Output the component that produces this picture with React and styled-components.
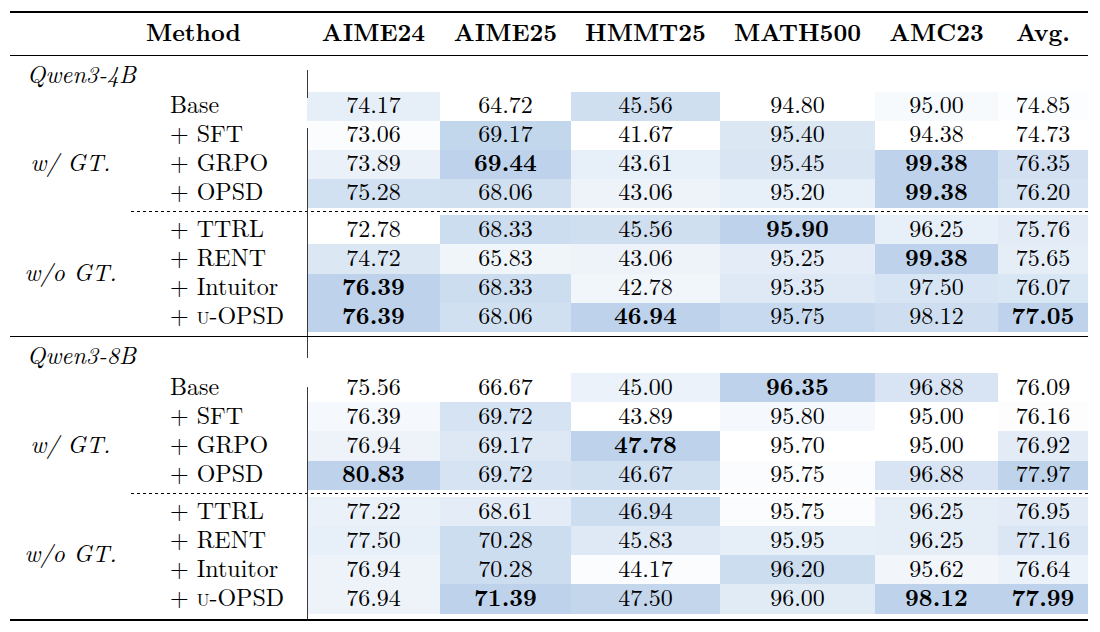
import React from 'react';
import styled, { createGlobalStyle, css } from 'styled-components';

const GlobalStyle = createGlobalStyle`
  html, body {
    margin: 0;
    padding: 0;
    background: #ffffff;
  }
`;

// every text part names its family itself, nothing relies on inheritance
const text = css`
  font-family: "Latin Modern Roman", "Liberation Serif", serif;
  color: #000000;
  font-size: 24px;
  line-height: 24px;
`;

// Latin Modern sits low in its box; lift the glyphs a little when centred
const lift = css`
  box-sizing: border-box;
  padding-bottom: 6px;
`;

// column widths: group | method | AIME24 | AIME25 | HMMT25 | MATH500 | AMC23 | Avg.
const COLS = '121px 176px 133px 131px 149px 155px 123px 90px';
const DARK = [190, 211, 235];

const edge = css`
  position: relative;
  &::before {
    content: '';
    position: absolute;
    left: 0;
    width: 1.3px;
    top: ${props => props.$top || 0}px;
    bottom: ${props => props.$bottom || 0}px;
    background: #3a3a3a;
  }
`;

const Page = styled.div`
  width: 1100px;
  height: 632px;
  padding: 11px 0 0 10px;
  box-sizing: border-box;
`;

const Table = styled.div`
  width: 1078px;
  border-top: 2px solid #000;
  border-bottom: 2px solid #000;
`;

const HeadRow = styled.div`
  display: grid;
  grid-template-columns: ${COLS};
  height: 41.5px;
  align-items: stretch;
  border-bottom: 1.4px solid #000;
`;

const HeadCell = styled.div`
  ${text}
  ${lift}
  display: flex;
  align-items: center;
  justify-content: ${props => props.$left ? 'flex-start' : 'center'};
  padding-left: ${props => props.$left ? '15px' : '0'};
  font-weight: 700;
  white-space: nowrap;
`;

const ModelRow = styled.div`
  display: grid;
  grid-template-columns: ${COLS};
  height: 36px;
`;

const ModelName = styled.div`
  ${text}
  grid-column: 1 / 3;
  grid-row: 1;
  font-style: italic;
  padding: ${props => props.$pad}px 0 0 17px;
`;

const EdgeFill = styled.div`
  grid-column: 3;
  grid-row: 1;
  ${edge}
`;

const Block = styled.div`
  display: grid;
  grid-template-columns: ${COLS};
  grid-auto-rows: 29.1px;
`;

const Group = styled.div`
  ${text}
  ${lift}
  grid-column: 1;
  grid-row: ${props => props.$rows};
  display: flex;
  align-items: center;
  justify-content: center;
  font-style: italic;
  white-space: pre;
`;

const Method = styled.div`
  ${text}
  ${lift}
  grid-column: 2;
  display: flex;
  align-items: center;
  padding-left: 39px;
  white-space: pre;
`;

const Sc = styled.span`
  font-variant: small-caps;
`;

const Num = styled.div`
  ${text}
  ${lift}
  display: flex;
  align-items: center;
  justify-content: center;
  background: ${props => props.$bg};
  font-weight: ${props => props.$bold ? 700 : 400};
  ${props => props.$edge && edge}
`;

const SepRow = styled.div`
  display: grid;
  grid-template-columns: ${COLS};
  height: ${props => props.$h}px;
  border-bottom: ${props => props.$rule ? '1.2px solid #000' : 'none'};
`;

const Dash = styled.div`
  grid-column: 2 / -1;
  grid-row: 1;
  background: repeating-linear-gradient(to right, #000 0 3.2px, transparent 3.2px 6px) center / 100% 1px no-repeat;
`;

const HEADERS = ['AIME24', 'AIME25', 'HMMT25', 'MATH500', 'AMC23', 'Avg.'];

const MODELS = [
  {
    name: 'Qwen3-4B',
    pad: 5,
    label: { top: 14.8, bottom: 0 },
    edges: [{ top: 0, bottom: 22.7 }, { top: 7, bottom: 0 }],
    rows: [
      ['Base', [74.17, 64.72, 45.56, 94.80, 95.00, 74.85]],
      ['SFT', [73.06, 69.17, 41.67, 95.40, 94.38, 74.73]],
      ['GRPO', [73.89, 69.44, 43.61, 95.45, 99.38, 76.35]],
      ['OPSD', [75.28, 68.06, 43.06, 95.20, 99.38, 76.20]],
      ['TTRL', [72.78, 68.33, 45.56, 95.90, 96.25, 75.76]],
      ['RENT', [74.72, 65.83, 43.06, 95.25, 99.38, 75.65]],
      ['Intuitor', [76.39, 68.33, 42.78, 95.35, 97.50, 76.07]],
      ['u-OPSD', [76.39, 68.06, 46.94, 95.75, 98.12, 77.05]],
    ],
  },
  {
    name: 'Qwen3-8B',
    pad: 4.5,
    label: { top: 0, bottom: 14.9 },
    edges: [{ top: 14, bottom: 0 }],
    rows: [
      ['Base', [75.56, 66.67, 45.00, 96.35, 96.88, 76.09]],
      ['SFT', [76.39, 69.72, 43.89, 95.80, 95.00, 76.16]],
      ['GRPO', [76.94, 69.17, 47.78, 95.70, 95.00, 76.92]],
      ['OPSD', [80.83, 69.72, 46.67, 95.75, 96.88, 77.97]],
      ['TTRL', [77.22, 68.61, 46.94, 95.75, 96.25, 76.95]],
      ['RENT', [77.50, 70.28, 45.83, 95.95, 96.25, 77.16]],
      ['Intuitor', [76.94, 70.28, 44.17, 96.20, 95.62, 76.64]],
      ['u-OPSD', [76.94, 71.39, 47.50, 96.00, 98.12, 77.99]],
    ],
  },
];

function shade(t) {
  const c = DARK.map(d => Math.round(255 + (d - 255) * t));
  return `rgb(${c[0]}, ${c[1]}, ${c[2]})`;
}

function MethodLabel({ name }) {
  if (name === 'Base') return <Method>Base</Method>;
  if (name === 'u-OPSD') {
    return <Method>+ <Sc>u</Sc>-OPSD</Method>;
  }
  return <Method>+ {name}</Method>;
}

function DataRows({ model, from, to }) {
  const cols = HEADERS.map((_, c) => model.rows.map(r => r[1][c]));
  const ranges = cols.map(vals => [Math.min(...vals), Math.max(...vals)]);

  return model.rows.slice(from, to).map(([name, vals], i) => {
    const e = model.edges[from + i] || { top: 0, bottom: 0 };
    return (
      <React.Fragment key={name}>
        <MethodLabel name={name} />
        {vals.map((v, c) => {
          const [lo, hi] = ranges[c];
          const t = (v - lo) / (hi - lo);
          return (
            <Num
              key={c}
              $bg={shade(t)}
              $bold={v === hi}
              $edge={c === 0}
              $top={e.top}
              $bottom={e.bottom}
            >
              {v.toFixed(2)}
            </Num>
          );
        })}
      </React.Fragment>
    );
  });
}

function ModelSection({ model, last }) {
  return (
    <>
      <ModelRow>
        <ModelName $pad={model.pad}>{model.name}</ModelName>
        <EdgeFill $top={model.label.top} $bottom={model.label.bottom} />
      </ModelRow>
      <Block>
        <Group $rows="2 / span 3">w/ GT.</Group>
        <DataRows model={model} from={0} to={4} />
      </Block>
      <SepRow $h={7.5}>
        <Dash />
        <EdgeFill />
      </SepRow>
      <Block>
        <Group $rows="1 / span 4">w/o GT.</Group>
        <DataRows model={model} from={4} to={8} />
      </Block>
      <SepRow $h={last ? 5 : 4.5} $rule={!last}>
        <EdgeFill />
      </SepRow>
    </>
  );
}

export default function App() {
  return (
    <React.Fragment>
      <GlobalStyle />
      <Page>
        <Table>
          <HeadRow>
            <div />
            <HeadCell $left>Method</HeadCell>
            {HEADERS.map(h => <HeadCell key={h}>{h}</HeadCell>)}
          </HeadRow>
          {MODELS.map((m, i) => (
            <ModelSection key={m.name} model={m} last={i === MODELS.length - 1} />
          ))}
        </Table>
      </Page>
    </React.Fragment>
  );
}
